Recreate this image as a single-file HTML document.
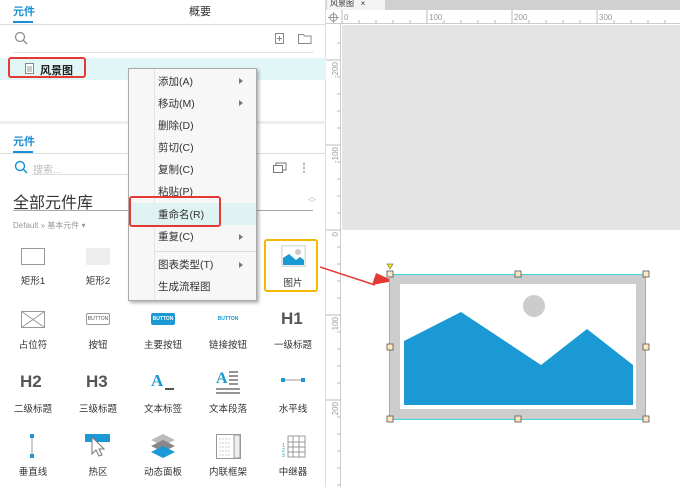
<!DOCTYPE html>
<html><head><meta charset="utf-8"><style>
*{margin:0;padding:0;box-sizing:border-box}
body{width:680px;height:487px;overflow:hidden;background:#fff;font-family:"Liberation Sans","Noto Sans CJK SC",sans-serif;position:relative;color:#333}
.a{position:absolute}
.t{font-size:10px;color:#333;white-space:nowrap}
.lbl{position:absolute;font-size:9.5px;color:#333;width:64px;text-align:center}
.mi{position:absolute;left:158px;font-size:10.5px;color:#333}
.arr{position:absolute;left:239px;width:0;height:0;border-left:4px solid #777;border-top:3px solid transparent;border-bottom:3px solid transparent}
</style></head><body>
<!-- left panel -->
<div class="a" style="left:0;top:0;width:326px;height:487px;background:#fff;border-right:1px solid #ddd"></div>
<div class="a" style="left:13px;top:3px;font-size:11px;color:#1a8fd6;font-weight:bold">元件</div>
<div class="a" style="left:13px;top:21px;width:20px;height:2px;background:#1a8fd6"></div>
<div class="a" style="left:189px;top:3px;font-size:11px;color:#333">概要</div>
<div class="a" style="left:0;top:24px;width:326px;height:1px;background:#ddd"></div>
<svg class="a" style="left:14px;top:31px" width="14" height="14"><circle cx="6" cy="6" r="4.5" fill="none" stroke="#888" stroke-width="1.2"/><line x1="9.5" y1="9.5" x2="13" y2="13" stroke="#888" stroke-width="1.3"/></svg>
<svg class="a" style="left:275px;top:33px" width="10" height="11"><rect x="0.5" y="0.5" width="8" height="10" fill="none" stroke="#888"/><path d="M4.5 3v5M2 5.5h5" stroke="#888"/></svg>
<svg class="a" style="left:298px;top:33px" width="14" height="11"><path d="M0.5 1.5h5l1 1.5h6.5v7.5h-12.5z" fill="none" stroke="#888"/></svg>
<div class="a" style="left:13px;top:52px;width:301px;height:1px;background:#e2e2e2"></div>
<div class="a" style="left:0;top:58px;width:326px;height:22px;background:#e1f7f7"></div>
<svg class="a" style="left:25px;top:63px" width="9" height="11"><rect x="0.5" y="0.5" width="8" height="10" fill="#fff" stroke="#888"/><path d="M2 4h5M2 6h5M2 8h5" stroke="#999"/></svg>
<div class="a" style="left:40px;top:62px;font-size:11px;color:#222;font-weight:bold">风景图</div>
<div class="a" style="left:8px;top:57px;width:78px;height:21px;border:2px solid #e53935;border-radius:3px"></div>
<div class="a" style="left:0;top:121px;width:326px;height:3px;background:#eee"></div>
<div class="a" style="left:13px;top:133px;font-size:11px;color:#1a8fd6;font-weight:bold">元件</div>
<div class="a" style="left:13px;top:151px;width:20px;height:2px;background:#1a8fd6"></div>
<div class="a" style="left:0;top:153px;width:326px;height:1px;background:#ddd"></div>
<svg class="a" style="left:14px;top:160px" width="15" height="15"><circle cx="6" cy="6" r="4.5" fill="none" stroke="#1a8fd6" stroke-width="1.4"/><line x1="9.5" y1="9.5" x2="13" y2="13" stroke="#1a8fd6" stroke-width="1.5"/></svg>
<div class="a" style="left:33px;top:161px;font-size:10px;color:#bbb">搜索...</div>
<div class="a" style="left:32px;top:174px;width:226px;height:1px;background:#ddd"></div>
<svg class="a" style="left:273px;top:162px" width="14" height="11"><rect x="0.5" y="3.5" width="9" height="7" fill="#fff" stroke="#777"/><path d="M3 3.5V1h10v7h-3" fill="none" stroke="#777"/></svg>
<div class="a" style="left:303px;top:162px;width:2px;height:11px;background:radial-gradient(#777 45%,transparent 50%) 0 0/2px 4px"></div>
<div class="a" style="left:13px;top:189px;font-size:16px;color:#333">全部元件库</div>
<div class="a" style="left:308px;top:193px;font-size:8px;color:#bbb;line-height:7px">︿<br>﹀</div>
<div class="a" style="left:13px;top:210px;width:300px;height:1px;background:#aaa"></div>
<div class="a" style="left:13px;top:220px;font-size:8px;color:#999">Default » 基本元件 ▾</div>

<!-- grid row1 -->
<div class="a" style="left:21px;top:248px;width:24px;height:17px;border:1px solid #999;background:#fff"></div>
<div class="lbl" style="left:1px;top:273px">矩形1</div>
<div class="a" style="left:86px;top:248px;width:24px;height:17px;background:#eee"></div>
<div class="lbl" style="left:66px;top:273px">矩形2</div>
<div class="a" style="left:264px;top:239px;width:54px;height:53px;border:2px solid #f5b800;border-radius:3px"></div>
<svg class="a" style="left:281px;top:245px" width="25" height="22"><rect x="0" y="0" width="25" height="22" fill="#ddd"/><rect x="1.5" y="1.5" width="22" height="19" fill="#fff"/><circle cx="17" cy="7" r="3" fill="#ccc"/><path d="M2 13l6-4 7 6 4-3 4 3v5H2z" fill="#1a99d4"/></svg>
<div class="lbl" style="left:261px;top:275px">图片</div>
<!-- row2 -->
<svg class="a" style="left:21px;top:311px" width="24" height="17"><rect x="0.5" y="0.5" width="23" height="16" fill="#fff" stroke="#999"/><path d="M0.5 0.5l23 16M23.5 0.5l-23 16" stroke="#999"/></svg>
<div class="lbl" style="left:1px;top:337px">占位符</div>
<div class="a" style="left:86px;top:313px;width:24px;height:12px;border:1px solid #999;border-radius:2px;font-size:5px;text-align:center;line-height:10px;color:#555">BUTTON</div>
<div class="lbl" style="left:66px;top:337px">按钮</div>
<div class="a" style="left:151px;top:313px;width:24px;height:12px;background:#1a99d4;border-radius:2px;font-size:5px;text-align:center;line-height:12px;color:#fff;font-weight:bold">BUTTON</div>
<div class="lbl" style="left:131px;top:337px">主要按钮</div>
<div class="a" style="left:216px;top:313px;width:24px;height:12px;font-size:5px;text-align:center;line-height:12px;color:#1a99d4;font-weight:bold">BUTTON</div>
<div class="lbl" style="left:196px;top:337px">链接按钮</div>
<div class="a" style="left:281px;top:309px;font-size:17px;font-weight:bold;color:#555">H1</div>
<div class="lbl" style="left:261px;top:337px">一级标题</div>
<!-- row3 -->
<div class="a" style="left:20px;top:372px;font-size:17px;font-weight:bold;color:#555">H2</div>
<div class="lbl" style="left:1px;top:401px">二级标题</div>
<div class="a" style="left:86px;top:372px;font-size:17px;font-weight:bold;color:#555">H3</div>
<div class="lbl" style="left:66px;top:401px">三级标题</div>
<div class="a" style="left:151px;top:371px;font-size:17px;font-weight:bold;color:#1a99d4;font-family:'Liberation Serif',serif">A</div>
<div class="a" style="left:165px;top:388px;width:9px;height:1.5px;background:#555"></div>
<div class="lbl" style="left:131px;top:401px">文本标签</div>
<div class="a" style="left:216px;top:370px;font-size:16px;font-weight:bold;color:#1a99d4;font-family:'Liberation Serif',serif">A</div>
<svg class="a" style="left:216px;top:371px" width="25" height="24"><path d="M13 1h9M13 5h9M13 9h9M13 13h9M0 18h24M0 22h24" stroke="#555" stroke-width="1.2"/></svg>
<div class="lbl" style="left:196px;top:401px">文本段落</div>
<svg class="a" style="left:281px;top:377px" width="24" height="6"><rect x="0" y="1" width="4" height="4" fill="#1a99d4"/><rect x="20" y="1" width="4" height="4" fill="#1a99d4"/><line x1="4" y1="3" x2="20" y2="3" stroke="#999"/></svg>
<div class="lbl" style="left:261px;top:401px">水平线</div>
<!-- row4 -->
<svg class="a" style="left:29px;top:434px" width="6" height="24"><rect x="1" y="0" width="4" height="4" fill="#1a99d4"/><rect x="1" y="20" width="4" height="4" fill="#1a99d4"/><line x1="3" y1="4" x2="3" y2="20" stroke="#999"/></svg>
<div class="lbl" style="left:1px;top:464px">垂直线</div>
<svg class="a" style="left:85px;top:434px" width="26" height="25"><rect x="0" y="0" width="25" height="8" fill="#1a99d4"/><path d="M7 3v17l4-4 3 6 3-1-3-6h5z" fill="#fff" stroke="#777"/></svg>
<div class="lbl" style="left:66px;top:464px">热区</div>
<svg class="a" style="left:150px;top:434px" width="26" height="24"><path d="M13 0l12 6-12 6-12-6z" fill="#bbb"/><path d="M13 6l12 6-12 6-12-6z" fill="#888"/><path d="M13 12l12 6-12 6-12-6z" fill="#1a99d4"/></svg>
<div class="lbl" style="left:131px;top:464px">动态面板</div>
<svg class="a" style="left:216px;top:434px" width="25" height="25"><rect x="0.5" y="0.5" width="24" height="24" fill="#fff" stroke="#999"/><rect x="18" y="1" width="6" height="23" fill="#eee" stroke="#999"/><path d="M3 5h12M3 9h12M3 13h12M3 17h12M3 21h12" stroke="#ccc" stroke-dasharray="2 1"/></svg>
<div class="lbl" style="left:196px;top:464px">内联框架</div>
<svg class="a" style="left:282px;top:434px" width="24" height="24"><path d="M6 2h17v21H6zM6 8h17M6 13h17M6 18h17M11 2v21M17 2v21" fill="none" stroke="#999"/><text x="0" y="13" font-size="5" fill="#1a99d4">1</text><text x="0" y="18" font-size="5" fill="#1a99d4">2</text><text x="0" y="23" font-size="5" fill="#1a99d4">3</text></svg>
<div class="lbl" style="left:261px;top:464px">中继器</div>

<!-- right area -->
<div class="a" style="left:326px;top:0;width:354px;height:10px;background:#d0d0d0"></div>
<div class="a" style="left:327px;top:0;width:58px;height:10px;background:#f4f4f4;font-size:8px;line-height:8px;padding-left:3px;color:#333">风景图 &nbsp; ×</div>
<div class="a" style="left:326px;top:10px;width:354px;height:14px;background:#fff;border-bottom:1px solid #ccc"></div>
<div class="a" style="left:326px;top:24px;width:15px;height:463px;background:#fff;border-right:1px solid #ccc"></div>
<svg class="a" style="left:328px;top:12px" width="11" height="11"><circle cx="5.5" cy="5.5" r="3.5" fill="none" stroke="#999"/><path d="M5.5 0v11M0 5.5h11" stroke="#999"/></svg>
<svg class="a" style="left:341px;top:10px" width="339" height="14"><g stroke="#bbb"><path d="M1 0v14M86 0v14M171 0v14M256 0v14"/><path d="M18 10v4M35 10v4M52 10v4M69 10v4M103 10v4M120 10v4M137 10v4M154 10v4M188 10v4M205 10v4M222 10v4M239 10v4M273 10v4M290 10v4M307 10v4M324 10v4"/></g><g font-size="8" fill="#999" font-family="Liberation Sans"><text x="3" y="10">0</text><text x="88" y="10">100</text><text x="173" y="10">200</text><text x="258" y="10">300</text></g></svg>
<svg class="a" style="left:326px;top:24px" width="15" height="463"><g stroke="#bbb"><path d="M0 36h15M0 121h15M0 206h15M0 291h15M0 376h15"/><path d="M11 19h4M11 53h4M11 70h4M11 87h4M11 104h4M11 138h4M11 155h4M11 172h4M11 189h4M11 223h4M11 240h4M11 257h4M11 274h4M11 308h4M11 325h4M11 342h4M11 359h4M11 393h4M11 410h4M11 427h4M11 444h4M11 461h4"/></g><g font-size="8" fill="#999" font-family="Liberation Sans"><text transform="translate(12,38) rotate(-90)" text-anchor="end">-200</text><text transform="translate(12,123) rotate(-90)" text-anchor="end">-100</text><text transform="translate(12,208) rotate(-90)" text-anchor="end">0</text><text transform="translate(12,293) rotate(-90)" text-anchor="end">100</text><text transform="translate(12,378) rotate(-90)" text-anchor="end">200</text></g></svg>
<div class="a" style="left:342px;top:25px;width:338px;height:205px;background:#e4e4e4"></div>

<!-- image widget -->
<svg class="a" style="left:320px;top:255px" width="360" height="175">
<path d="M0 12l55 18" stroke="#e53935" stroke-width="1.5"/><path d="M74 26l-18-8-4 12z" fill="#e53935"/>
<rect x="69.5" y="19.5" width="256" height="145" fill="#cdcdcd" stroke="#3dd9d9"/>
<rect x="80" y="29" width="236" height="125" fill="#fff"/>
<circle cx="534" cy="306" r="11" fill="#ccc" transform="translate(-320,-255)"/>
<path d="M84 86l57-29 80 53 46-36 46 36v40H84z" fill="#1a99d4"/>
<g fill="#fde7c0" stroke="#555" stroke-width="0.8"><rect x="67" y="16" width="6" height="6"/><rect x="195" y="16" width="6" height="6"/><rect x="323" y="16" width="6" height="6"/><rect x="67" y="89" width="6" height="6"/><rect x="323" y="89" width="6" height="6"/><rect x="67" y="161" width="6" height="6"/><rect x="195" y="161" width="6" height="6"/><rect x="323" y="161" width="6" height="6"/></g>
<path d="M67 9h6l-3 5z" fill="#f5e600" stroke="#777" stroke-width="0.7"/>
</svg>

<!-- context menu -->
<div class="a" style="left:128px;top:68px;width:129px;height:233px;background:#f7f7f7;border:1px solid #aaa;box-shadow:2px 2px 3px rgba(0,0,0,.3)"></div>
<div class="a" style="left:154px;top:69px;width:1px;height:231px;background:#e4e4e4"></div>
<div class="a" style="left:129px;top:203px;width:127px;height:22px;background:#dff3f3"></div>
<div class="mi" style="top:74px">添加(A)</div><div class="arr" style="top:78px"></div>
<div class="mi" style="top:96px">移动(M)</div><div class="arr" style="top:100px"></div>
<div class="mi" style="top:118px">删除(D)</div>
<div class="mi" style="top:140px">剪切(C)</div>
<div class="mi" style="top:162px">复制(C)</div>
<div class="mi" style="top:184px">粘贴(P)</div>
<div class="mi" style="top:207px">重命名(R)</div>
<div class="mi" style="top:229px">重复(C)</div><div class="arr" style="top:234px"></div>
<div class="a" style="left:155px;top:251px;width:101px;height:1px;background:#e0e0e0"></div>
<div class="mi" style="top:257px">图表类型(T)</div><div class="arr" style="top:262px"></div>
<div class="mi" style="top:279px">生成流程图</div>
<div class="a" style="left:129px;top:196px;width:92px;height:31px;border:2px solid #e53935;border-radius:3px"></div>
</body></html>
